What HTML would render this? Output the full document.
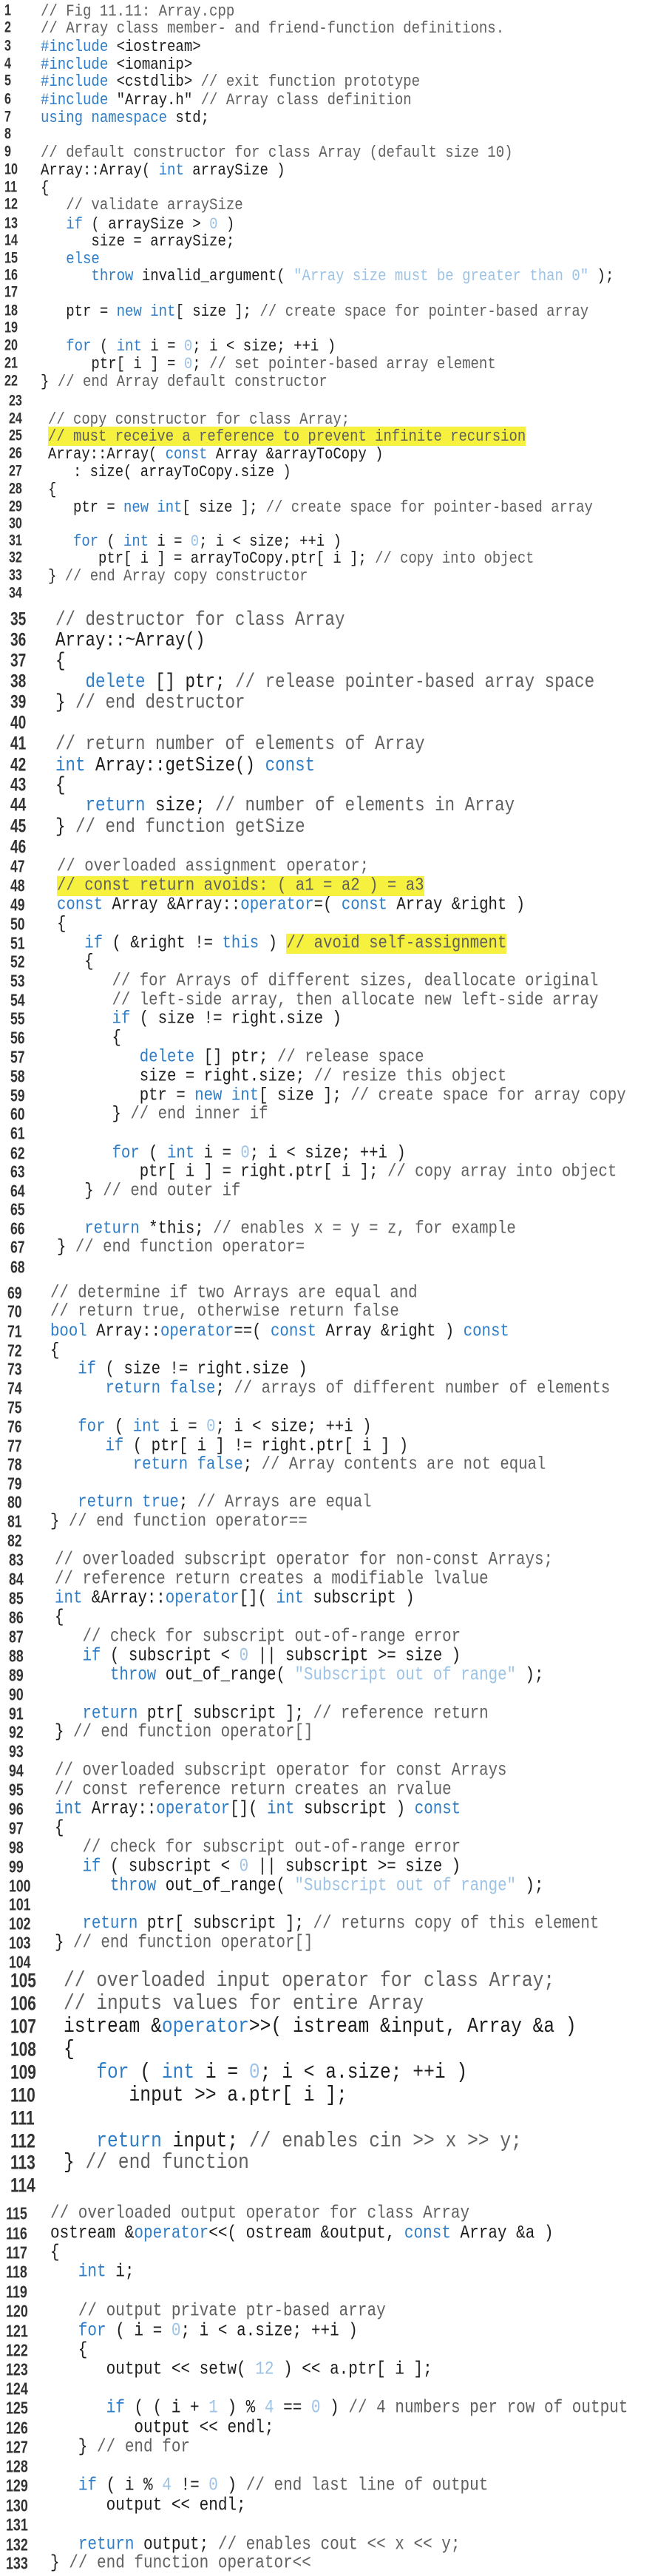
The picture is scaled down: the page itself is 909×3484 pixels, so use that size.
<!DOCTYPE html>
<html><head><meta charset="utf-8"><style>
html,body{margin:0;padding:0;background:#fff;}
body{width:909px;height:3484px;position:relative;overflow:hidden;}
.l{position:absolute;left:0;height:0;line-height:0;white-space:pre;font-family:"Liberation Mono",monospace;color:#1c1c1c;}
.l b{position:absolute;left:6px;top:0;font-family:"Liberation Sans",sans-serif;font-weight:bold;color:#333;transform:scaleX(.85) scaleY(1.1);transform-origin:0 0;}
.l span.t{position:absolute;top:0;transform:scaleY(1.18);transform-origin:0 0;}
.k{color:#2f7dc6;}
.c{color:#606060;}
.n{color:#9cc3e6;}
.h{background:#f6f13e;}
.a{font-size:19px}.a .t{left:55px}
.a2{font-size:18.9px}.a2 .t{left:65px}
.bb{font-size:22.5px}.bb .t{left:75px}.bb b{left:14px}
.cc{font-size:20.7px}.cc .t{left:77px}.cc b{left:14px}
.d{font-size:20.7px}.d .t{left:68px}.d b{left:10px}
.e{font-size:20.8px}.e .t{left:74px}.e b{left:12px}
.f{font-size:24.6px}.f .t{left:86px}.f b{left:14px}
.g{font-size:21px}.g .t{left:68px}.g b{left:8px}
</style></head><body>
<div class="l a" style="top:15px"><b>1</b><span class="t"><span class="c">// Fig 11.11: Array.cpp</span></span></div>
<div class="l a" style="top:38px"><b>2</b><span class="t"><span class="c">// Array class member- and friend-function definitions.</span></span></div>
<div class="l a" style="top:63px"><b>3</b><span class="t"><span class="k">#include</span> &lt;iostream&gt;</span></div>
<div class="l a" style="top:87px"><b>4</b><span class="t"><span class="k">#include</span> &lt;iomanip&gt;</span></div>
<div class="l a" style="top:110px"><b>5</b><span class="t"><span class="k">#include</span> &lt;cstdlib&gt; <span class="c">// exit function prototype</span></span></div>
<div class="l a" style="top:135px"><b>6</b><span class="t"><span class="k">#include</span> "Array.h" <span class="c">// Array class definition</span></span></div>
<div class="l a" style="top:159px"><b>7</b><span class="t"><span class="k">using namespace</span> std;</span></div>
<div class="l a" style="top:182px"><b>8</b><span class="t"></span></div>
<div class="l a" style="top:206px"><b>9</b><span class="t"><span class="c">// default constructor for class Array (default size 10)</span></span></div>
<div class="l a" style="top:230px"><b>10</b><span class="t">Array::Array( <span class="k">int</span> arraySize )</span></div>
<div class="l a" style="top:254px"><b>11</b><span class="t">{</span></div>
<div class="l a" style="top:277px"><b>12</b><span class="t">   <span class="c">// validate arraySize</span></span></div>
<div class="l a" style="top:303px"><b>13</b><span class="t">   <span class="k">if</span> ( arraySize &gt; <span class="n">0</span> )</span></div>
<div class="l a" style="top:326px"><b>14</b><span class="t">      size = arraySize;</span></div>
<div class="l a" style="top:350px"><b>15</b><span class="t">   <span class="k">else</span></span></div>
<div class="l a" style="top:373px"><b>16</b><span class="t">      <span class="k">throw</span> invalid_argument( <span class="n">"Array size must be greater than 0"</span> );</span></div>
<div class="l a" style="top:396px"><b>17</b><span class="t"></span></div>
<div class="l a" style="top:421px"><b>18</b><span class="t">   ptr = <span class="k">new int</span>[ size ]; <span class="c">// create space for pointer-based array</span></span></div>
<div class="l a" style="top:444px"><b>19</b><span class="t"></span></div>
<div class="l a" style="top:468px"><b>20</b><span class="t">   <span class="k">for</span> ( <span class="k">int</span> i = <span class="n">0</span>; i &lt; size; ++i )</span></div>
<div class="l a" style="top:492px"><b>21</b><span class="t">      ptr[ i ] = <span class="n">0</span>; <span class="c">// set pointer-based array element</span></span></div>
<div class="l a" style="top:516px"><b>22</b><span class="t">} <span class="c">// end Array default constructor</span></span></div>
<div class="l a2" style="top:543px"><b style="left:12px">23</b><span class="t"></span></div>
<div class="l a2" style="top:567px"><b style="left:12px">24</b><span class="t"><span class="c">// copy constructor for class Array;</span></span></div>
<div class="l a2" style="top:590px"><b style="left:12px">25</b><span class="t"><span class="c h">// must receive a reference to prevent infinite recursion</span></span></div>
<div class="l a2" style="top:614px"><b style="left:12px">26</b><span class="t">Array::Array( <span class="k">const</span> Array &amp;arrayToCopy )</span></div>
<div class="l a2" style="top:638px"><b style="left:12px">27</b><span class="t">   : size( arrayToCopy.size )</span></div>
<div class="l a2" style="top:662px"><b style="left:12px">28</b><span class="t">{</span></div>
<div class="l a2" style="top:686px"><b style="left:12px">29</b><span class="t">   ptr = <span class="k">new int</span>[ size ]; <span class="c">// create space for pointer-based array</span></span></div>
<div class="l a2" style="top:709px"><b style="left:12px">30</b><span class="t"></span></div>
<div class="l a2" style="top:732px"><b style="left:12px">31</b><span class="t">   <span class="k">for</span> ( <span class="k">int</span> i = <span class="n">0</span>; i &lt; size; ++i )</span></div>
<div class="l a2" style="top:755px"><b style="left:12px">32</b><span class="t">      ptr[ i ] = arrayToCopy.ptr[ i ]; <span class="c">// copy into object</span></span></div>
<div class="l a2" style="top:779px"><b style="left:12px">33</b><span class="t">} <span class="c">// end Array copy constructor</span></span></div>
<div class="l a2" style="top:803px"><b style="left:12px">34</b><span class="t"></span></div>
<div class="l bb" style="top:838px"><b>35</b><span class="t"><span class="c">// destructor for class Array</span></span></div>
<div class="l bb" style="top:866px"><b>36</b><span class="t">Array::~Array()</span></div>
<div class="l bb" style="top:894px"><b>37</b><span class="t">{</span></div>
<div class="l bb" style="top:922px"><b>38</b><span class="t">   <span class="k">delete</span> [] ptr; <span class="c">// release pointer-based array space</span></span></div>
<div class="l bb" style="top:950px"><b>39</b><span class="t">} <span class="c">// end destructor</span></span></div>
<div class="l bb" style="top:978px"><b>40</b><span class="t"></span></div>
<div class="l bb" style="top:1006px"><b>41</b><span class="t"><span class="c">// return number of elements of Array</span></span></div>
<div class="l bb" style="top:1035px"><b>42</b><span class="t"><span class="k">int</span> Array::getSize() <span class="k">const</span></span></div>
<div class="l bb" style="top:1062px"><b>43</b><span class="t">{</span></div>
<div class="l bb" style="top:1089px"><b>44</b><span class="t">   <span class="k">return</span> size; <span class="c">// number of elements in Array</span></span></div>
<div class="l bb" style="top:1118px"><b>45</b><span class="t">} <span class="c">// end function getSize</span></span></div>
<div class="l bb" style="top:1146px"><b>46</b><span class="t"></span></div>
<div class="l cc" style="top:1173px"><b>47</b><span class="t"><span class="c">// overloaded assignment operator;</span></span></div>
<div class="l cc" style="top:1199px"><b>48</b><span class="t"><span class="c h">// const return avoids: ( a1 = a2 ) = a3</span></span></div>
<div class="l cc" style="top:1225px"><b>49</b><span class="t"><span class="k">const</span> Array &amp;Array::<span class="k">operator</span>=( <span class="k">const</span> Array &amp;right )</span></div>
<div class="l cc" style="top:1251px"><b>50</b><span class="t">{</span></div>
<div class="l cc" style="top:1277px"><b>51</b><span class="t">   <span class="k">if</span> ( &amp;right != <span class="k">this</span> ) <span class="c h">// avoid self-assignment</span></span></div>
<div class="l cc" style="top:1302px"><b>52</b><span class="t">   {</span></div>
<div class="l cc" style="top:1328px"><b>53</b><span class="t">      <span class="c">// for Arrays of different sizes, deallocate original</span></span></div>
<div class="l cc" style="top:1354px"><b>54</b><span class="t">      <span class="c">// left-side array, then allocate new left-side array</span></span></div>
<div class="l cc" style="top:1379px"><b>55</b><span class="t">      <span class="k">if</span> ( size != right.size )</span></div>
<div class="l cc" style="top:1405px"><b>56</b><span class="t">      {</span></div>
<div class="l cc" style="top:1431px"><b>57</b><span class="t">         <span class="k">delete</span> [] ptr; <span class="c">// release space</span></span></div>
<div class="l cc" style="top:1457px"><b>58</b><span class="t">         size = right.size; <span class="c">// resize this object</span></span></div>
<div class="l cc" style="top:1483px"><b>59</b><span class="t">         ptr = <span class="k">new int</span>[ size ]; <span class="c">// create space for array copy</span></span></div>
<div class="l cc" style="top:1508px"><b>60</b><span class="t">      } <span class="c">// end inner if</span></span></div>
<div class="l cc" style="top:1534px"><b>61</b><span class="t"></span></div>
<div class="l cc" style="top:1561px"><b>62</b><span class="t">      <span class="k">for</span> ( <span class="k">int</span> i = <span class="n">0</span>; i &lt; size; ++i )</span></div>
<div class="l cc" style="top:1586px"><b>63</b><span class="t">         ptr[ i ] = right.ptr[ i ]; <span class="c">// copy array into object</span></span></div>
<div class="l cc" style="top:1612px"><b>64</b><span class="t">   } <span class="c">// end outer if</span></span></div>
<div class="l cc" style="top:1637px"><b>65</b><span class="t"></span></div>
<div class="l cc" style="top:1663px"><b>66</b><span class="t">   <span class="k">return</span> *this; <span class="c">// enables x = y = z, for example</span></span></div>
<div class="l cc" style="top:1688px"><b>67</b><span class="t">} <span class="c">// end function operator=</span></span></div>
<div class="l cc" style="top:1715px"><b>68</b><span class="t"></span></div>
<div class="l d" style="top:1750px"><b>69</b><span class="t"><span class="c">// determine if two Arrays are equal and</span></span></div>
<div class="l d" style="top:1775px"><b>70</b><span class="t"><span class="c">// return true, otherwise return false</span></span></div>
<div class="l d" style="top:1802px"><b>71</b><span class="t"><span class="k">bool</span> Array::<span class="k">operator</span>==( <span class="k">const</span> Array &amp;right ) <span class="k">const</span></span></div>
<div class="l d" style="top:1828px"><b>72</b><span class="t">{</span></div>
<div class="l d" style="top:1853px"><b>73</b><span class="t">   <span class="k">if</span> ( size != right.size )</span></div>
<div class="l d" style="top:1879px"><b>74</b><span class="t">      <span class="k">return false</span>; <span class="c">// arrays of different number of elements</span></span></div>
<div class="l d" style="top:1905px"><b>75</b><span class="t"></span></div>
<div class="l d" style="top:1931px"><b>76</b><span class="t">   <span class="k">for</span> ( <span class="k">int</span> i = <span class="n">0</span>; i &lt; size; ++i )</span></div>
<div class="l d" style="top:1957px"><b>77</b><span class="t">      <span class="k">if</span> ( ptr[ i ] != right.ptr[ i ] )</span></div>
<div class="l d" style="top:1982px"><b>78</b><span class="t">         <span class="k">return false</span>; <span class="c">// Array contents are not equal</span></span></div>
<div class="l d" style="top:2008px"><b>79</b><span class="t"></span></div>
<div class="l d" style="top:2033px"><b>80</b><span class="t">   <span class="k">return true</span>; <span class="c">// Arrays are equal</span></span></div>
<div class="l d" style="top:2059px"><b>81</b><span class="t">} <span class="c">// end function operator==</span></span></div>
<div class="l d" style="top:2085px"><b>82</b><span class="t"></span></div>
<div class="l e" style="top:2111px"><b>83</b><span class="t"><span class="c">// overloaded subscript operator for non-const Arrays;</span></span></div>
<div class="l e" style="top:2137px"><b>84</b><span class="t"><span class="c">// reference return creates a modifiable lvalue</span></span></div>
<div class="l e" style="top:2163px"><b>85</b><span class="t"><span class="k">int</span> &amp;Array::<span class="k">operator</span>[]( <span class="k">int</span> subscript )</span></div>
<div class="l e" style="top:2189px"><b>86</b><span class="t">{</span></div>
<div class="l e" style="top:2215px"><b>87</b><span class="t">   <span class="c">// check for subscript out-of-range error</span></span></div>
<div class="l e" style="top:2241px"><b>88</b><span class="t">   <span class="k">if</span> ( subscript &lt; <span class="n">0</span> || subscript &gt;= size )</span></div>
<div class="l e" style="top:2267px"><b>89</b><span class="t">      <span class="k">throw</span> out_of_range( <span class="n">"Subscript out of range"</span> );</span></div>
<div class="l e" style="top:2293px"><b>90</b><span class="t"></span></div>
<div class="l e" style="top:2319px"><b>91</b><span class="t">   <span class="k">return</span> ptr[ subscript ]; <span class="c">// reference return</span></span></div>
<div class="l e" style="top:2344px"><b>92</b><span class="t">} <span class="c">// end function operator[]</span></span></div>
<div class="l e" style="top:2370px"><b>93</b><span class="t"></span></div>
<div class="l e" style="top:2396px"><b>94</b><span class="t"><span class="c">// overloaded subscript operator for const Arrays</span></span></div>
<div class="l e" style="top:2422px"><b>95</b><span class="t"><span class="c">// const reference return creates an rvalue</span></span></div>
<div class="l e" style="top:2448px"><b>96</b><span class="t"><span class="k">int</span> Array::<span class="k">operator</span>[]( <span class="k">int</span> subscript ) <span class="k">const</span></span></div>
<div class="l e" style="top:2474px"><b>97</b><span class="t">{</span></div>
<div class="l e" style="top:2500px"><b>98</b><span class="t">   <span class="c">// check for subscript out-of-range error</span></span></div>
<div class="l e" style="top:2526px"><b>99</b><span class="t">   <span class="k">if</span> ( subscript &lt; <span class="n">0</span> || subscript &gt;= size )</span></div>
<div class="l e" style="top:2552px"><b>100</b><span class="t">      <span class="k">throw</span> out_of_range( <span class="n">"Subscript out of range"</span> );</span></div>
<div class="l e" style="top:2577px"><b>101</b><span class="t"></span></div>
<div class="l e" style="top:2603px"><b>102</b><span class="t">   <span class="k">return</span> ptr[ subscript ]; <span class="c">// returns copy of this element</span></span></div>
<div class="l e" style="top:2629px"><b>103</b><span class="t">} <span class="c">// end function operator[]</span></span></div>
<div class="l e" style="top:2655px"><b>104</b><span class="t"></span></div>
<div class="l f" style="top:2680px"><b>105</b><span class="t"><span class="c">// overloaded input operator for class Array;</span></span></div>
<div class="l f" style="top:2711px"><b>106</b><span class="t"><span class="c">// inputs values for entire Array</span></span></div>
<div class="l f" style="top:2742px"><b>107</b><span class="t">istream &amp;<span class="k">operator</span>&gt;&gt;( istream &amp;input, Array &amp;a )</span></div>
<div class="l f" style="top:2773px"><b>108</b><span class="t">{</span></div>
<div class="l f" style="top:2804px"><b>109</b><span class="t">   <span class="k">for</span> ( <span class="k">int</span> i = <span class="n">0</span>; i &lt; a.size; ++i )</span></div>
<div class="l f" style="top:2835px"><b>110</b><span class="t">      input &gt;&gt; a.ptr[ i ];</span></div>
<div class="l f" style="top:2866px"><b>111</b><span class="t"></span></div>
<div class="l f" style="top:2897px"><b>112</b><span class="t">   <span class="k">return</span> input; <span class="c">// enables cin &gt;&gt; x &gt;&gt; y;</span></span></div>
<div class="l f" style="top:2926px"><b>113</b><span class="t">} <span class="c">// end function</span></span></div>
<div class="l f" style="top:2957px"><b>114</b><span class="t"></span></div>
<div class="l g" style="top:2995px"><b>115</b><span class="t"><span class="c">// overloaded output operator for class Array</span></span></div>
<div class="l g" style="top:3022px"><b>116</b><span class="t">ostream &amp;<span class="k">operator</span>&lt;&lt;( ostream &amp;output, <span class="k">const</span> Array &amp;a )</span></div>
<div class="l g" style="top:3048px"><b>117</b><span class="t">{</span></div>
<div class="l g" style="top:3074px"><b>118</b><span class="t">   <span class="k">int</span> i;</span></div>
<div class="l g" style="top:3101px"><b>119</b><span class="t"></span></div>
<div class="l g" style="top:3127px"><b>120</b><span class="t">   <span class="c">// output private ptr-based array</span></span></div>
<div class="l g" style="top:3154px"><b>121</b><span class="t">   <span class="k">for</span> ( i = <span class="n">0</span>; i &lt; a.size; ++i )</span></div>
<div class="l g" style="top:3180px"><b>122</b><span class="t">   {</span></div>
<div class="l g" style="top:3206px"><b>123</b><span class="t">      output &lt;&lt; setw( <span class="n">12</span> ) &lt;&lt; a.ptr[ i ];</span></div>
<div class="l g" style="top:3232px"><b>124</b><span class="t"></span></div>
<div class="l g" style="top:3258px"><b>125</b><span class="t">      <span class="k">if</span> ( ( i + <span class="n">1</span> ) % <span class="n">4</span> == <span class="n">0</span> ) <span class="c">// 4 numbers per row of output</span></span></div>
<div class="l g" style="top:3285px"><b>126</b><span class="t">         output &lt;&lt; endl;</span></div>
<div class="l g" style="top:3311px"><b>127</b><span class="t">   } <span class="c">// end for</span></span></div>
<div class="l g" style="top:3337px"><b>128</b><span class="t"></span></div>
<div class="l g" style="top:3363px"><b>129</b><span class="t">   <span class="k">if</span> ( i % <span class="n">4</span> != <span class="n">0</span> ) <span class="c">// end last line of output</span></span></div>
<div class="l g" style="top:3390px"><b>130</b><span class="t">      output &lt;&lt; endl;</span></div>
<div class="l g" style="top:3416px"><b>131</b><span class="t"></span></div>
<div class="l g" style="top:3443px"><b>132</b><span class="t">   <span class="k">return</span> output; <span class="c">// enables cout &lt;&lt; x &lt;&lt; y;</span></span></div>
<div class="l g" style="top:3468px"><b>133</b><span class="t">} <span class="c">// end function operator&lt;&lt;</span></span></div>
</body></html>
